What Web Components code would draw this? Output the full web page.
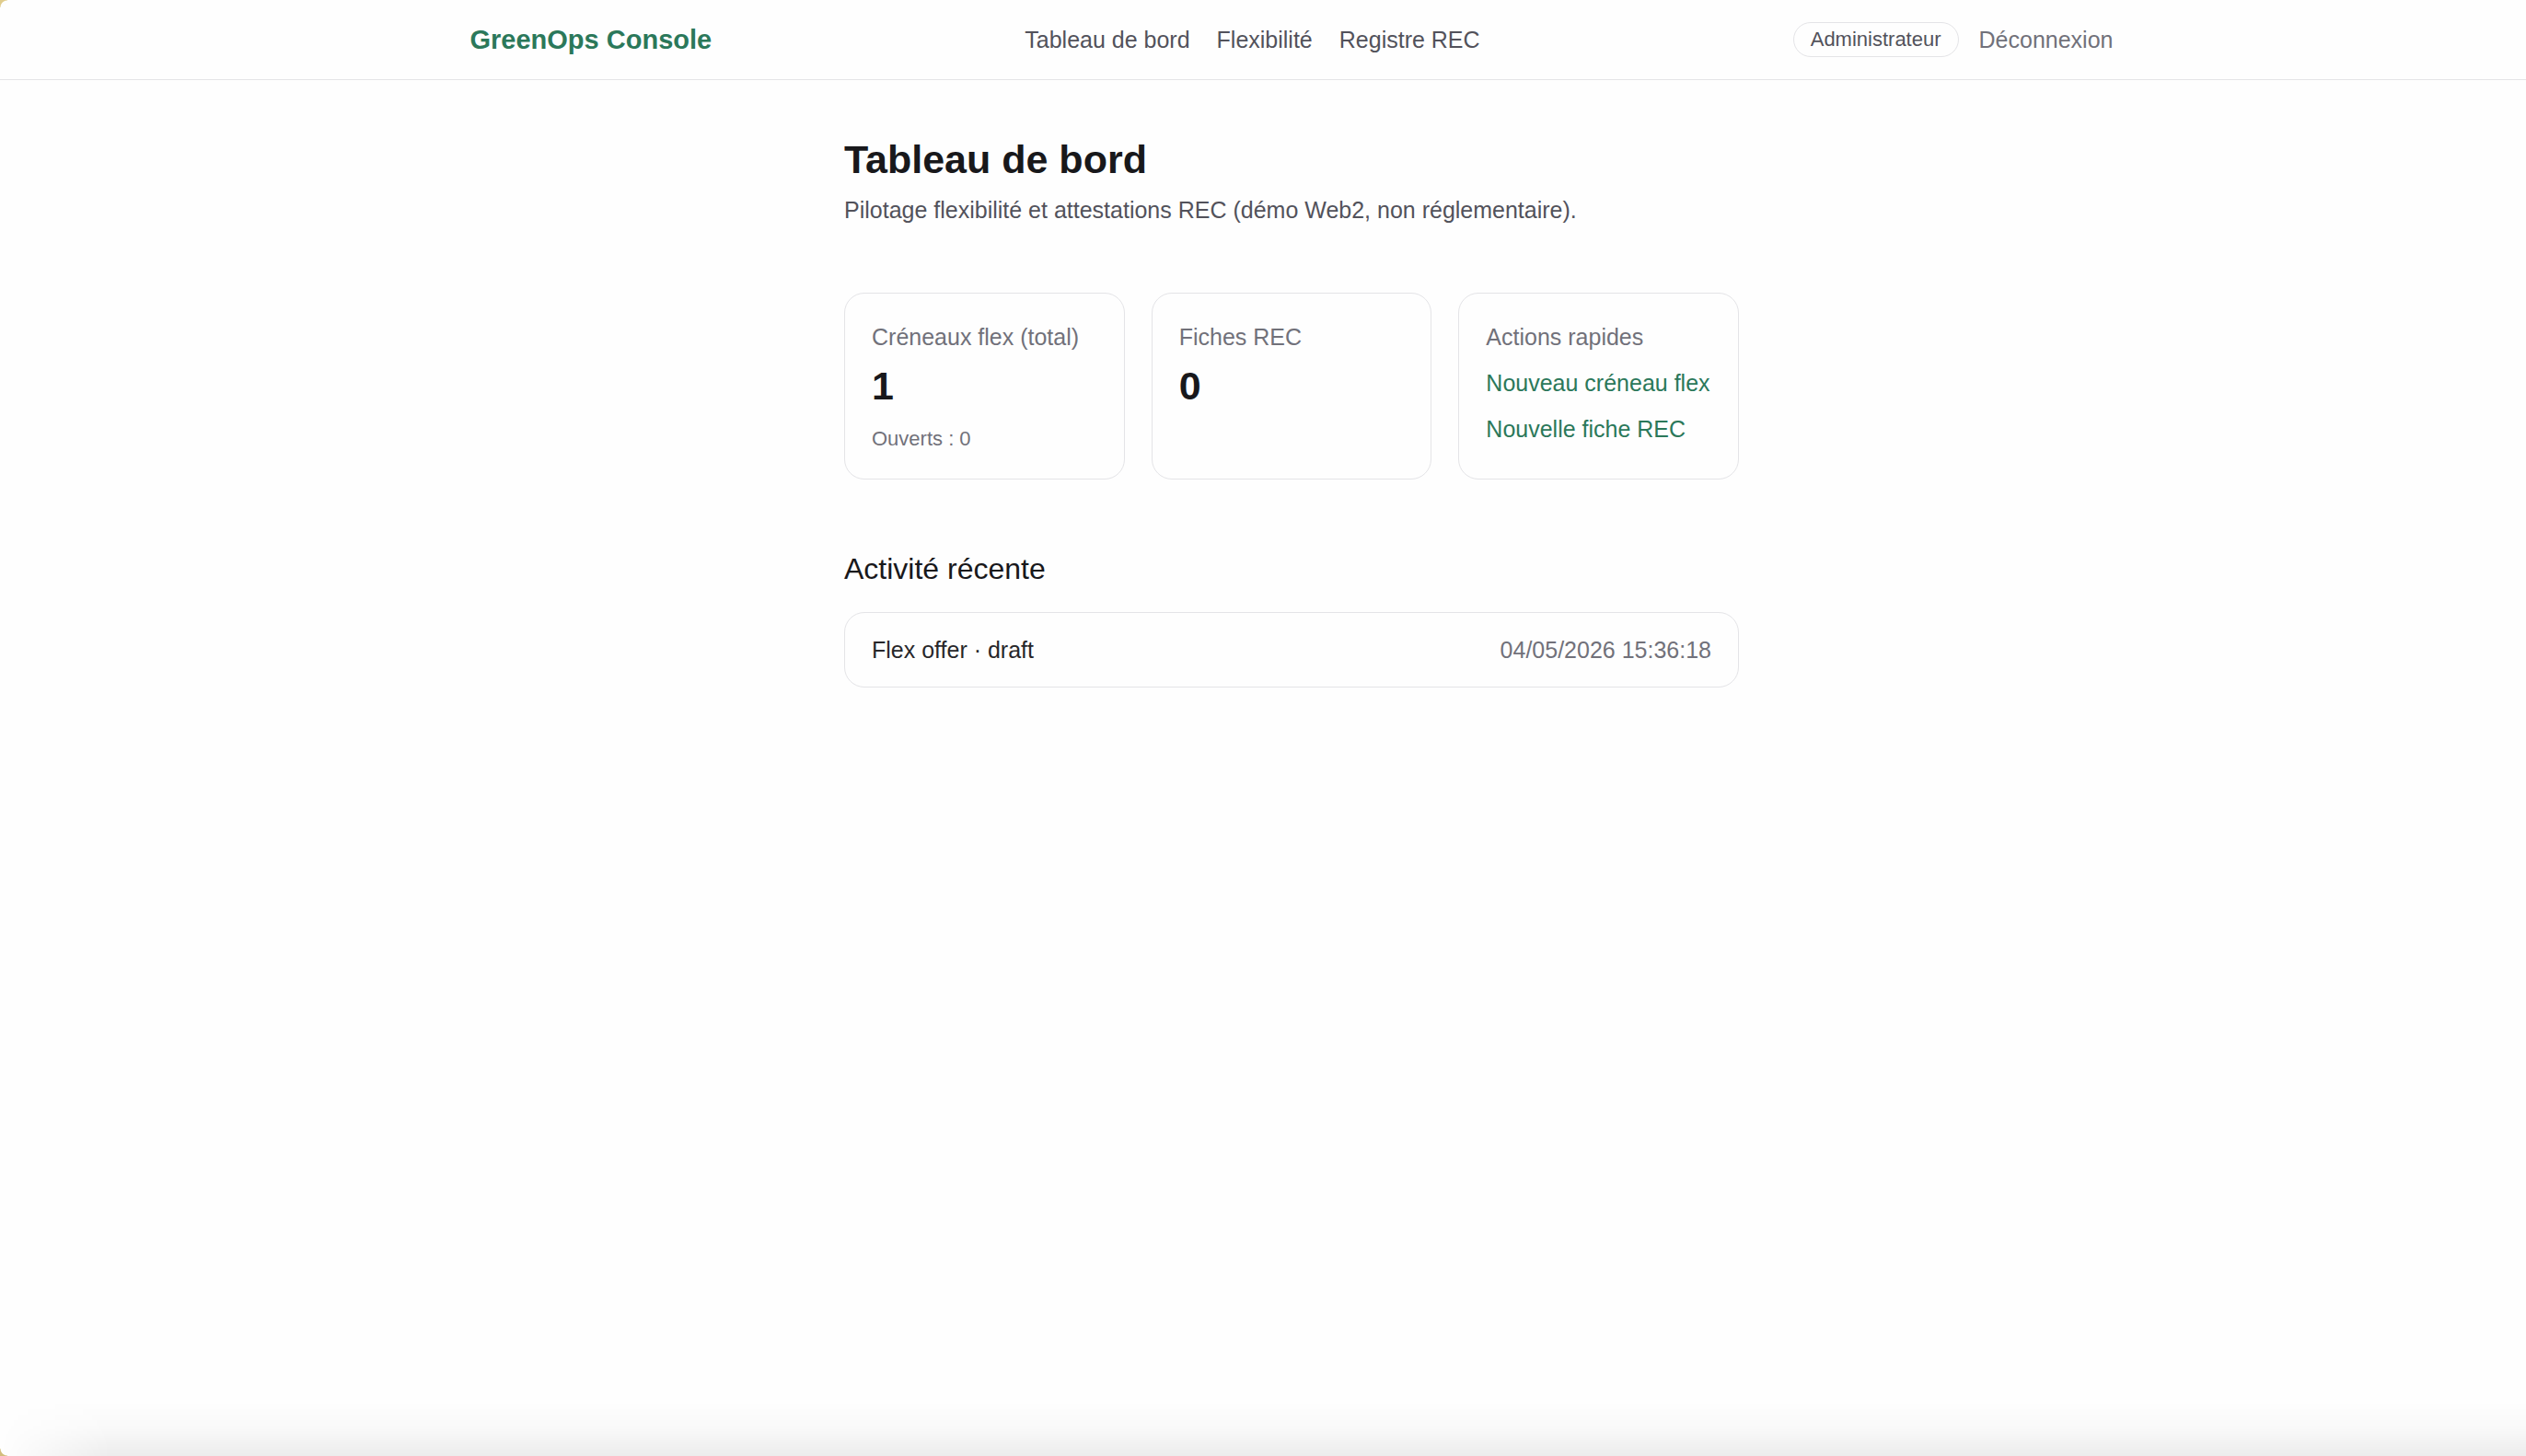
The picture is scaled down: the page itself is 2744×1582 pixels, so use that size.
<!DOCTYPE html>
<html lang="fr">
<head>
<meta charset="utf-8">
<title>GreenOps Console</title>
<style>
html {
  --green: #2b785a;
  --ink: #18181b;
  --body: #52525b;
  --muted: #71717a;
  --line: #e4e4e7;
}
body {
  margin: 0;
  background: #fefefe;
  color: var(--ink);
  font: 25px/36px "Liberation Sans", Arial, sans-serif;
}
</style>
</head>
<body>
<app-shell>
  <app-header slot="header" brand="GreenOps Console" role-name="Administrateur">
    <nav-link href="#dashboard">Tableau de bord</nav-link>
    <nav-link href="#flex">Flexibilité</nav-link>
    <nav-link href="#rec">Registre REC</nav-link>
  </app-header>

  <page-title heading="Tableau de bord">Pilotage flexibilité et attestations REC (démo Web2, non réglementaire).</page-title>

  <card-grid>
    <stat-card label="Créneaux flex (total)" value="1">Ouverts : 0</stat-card>
    <stat-card label="Fiches REC" value="0"></stat-card>
    <action-card label="Actions rapides">
      <action-link href="#new-flex">Nouveau créneau flex</action-link>
      <action-link href="#new-rec">Nouvelle fiche REC</action-link>
    </action-card>
  </card-grid>

  <activity-list heading="Activité récente">
    <activity-item datetime="2026-05-04T15:36:18" date="04/05/2026 15:36:18">Flex offer · draft</activity-item>
  </activity-list>
</app-shell>

<script>
// Small base: clones a template and copies attributes into [data-text] nodes
class BaseElement extends HTMLElement {
  constructor() {
    super();
    this.attachShadow({ mode: 'open' });
    const tpl = document.createElement('template');
    tpl.innerHTML = this.constructor.template;
    this.shadowRoot.appendChild(tpl.content.cloneNode(true));
  }

  connectedCallback() {
    this.shadowRoot.querySelectorAll('[data-text]').forEach((el) => {
      el.textContent = this.getAttribute(el.dataset.text) || '';
    });
    const link = this.shadowRoot.querySelector('a[data-href]');
    if (link) link.href = this.getAttribute('href') || '#';
  }
}

// ── Layout ──────────────────────────────────────────────────────────────────
class AppShell extends BaseElement {
  static template = `
<style>
:host {
  display: flex;
  flex-direction: column;
  min-height: 100vh;
  position: relative;
  overflow: hidden;
  --shift: 62px;
}
main {
  box-sizing: border-box;
  width: 100%;
  padding: 58px 0 58px var(--shift);
}
.column {
  display: flex;
  flex-direction: column;
  gap: 72px;
  box-sizing: border-box;
  width: 100%;
  max-width: 1030px;
  margin: 0 auto;
  padding: 0 29px;
}
.shade {
  position: absolute;
  inset: auto 0 0 0;
  height: 60px;
  pointer-events: none;
  background: linear-gradient(to bottom, transparent, rgba(0,0,0,0.02) 50%, rgba(0,0,0,0.07));
  mask-image: linear-gradient(to right, transparent, #000 120px);
}
.corner {
  position: absolute;
  left: 0;
  width: 8px;
  height: 8px;
  pointer-events: none;
}
.top { top: 0; background: radial-gradient(circle at 100% 100%, transparent 7px, #e0cc8c 8px); }
.bottom { bottom: 0; background: radial-gradient(circle at 100% 0, transparent 7px, #d3bd7c 8px); }
</style>
<slot name="header"></slot>
<main><div class="column"><slot></slot></div></main>
<div class="shade"></div>
<div class="corner top"></div>
<div class="corner bottom"></div>
`;
}

class AppHeader extends BaseElement {
  static template = `
<style>
:host { display: block; }
header {
  padding-left: var(--shift);
  border-bottom: 1px solid var(--line);
}
.bar {
  display: flex;
  align-items: center;
  justify-content: space-between;
  box-sizing: border-box;
  max-width: 1843px;
  min-height: 86px;
  margin: 0 auto;
  padding: 0 29px;
}
.brand {
  color: var(--green);
  font-size: 29px;
  font-weight: 700;
  text-decoration: none;
}
nav { display: flex; gap: 29px; }
.account { display: flex; align-items: center; gap: 22px; }
.role {
  padding: 4px 18px;
  border: 1px solid var(--line);
  border-radius: 20px;
  color: var(--body);
  font-size: 22px;
  line-height: 28px;
}
button {
  padding: 0;
  border: 0;
  background: none;
  color: var(--muted);
  font: inherit;
  cursor: pointer;
}
</style>
<header>
  <div class="bar">
    <a class="brand" href="#" data-text="brand"></a>
    <nav><slot></slot></nav>
    <div class="account">
      <span class="role" data-text="role-name"></span>
      <button type="button">Déconnexion</button>
    </div>
  </div>
</header>
`;
}

class NavLink extends BaseElement {
  static template = `
<style>
:host { display: block; }
a { color: var(--body); text-decoration: none; }
</style>
<a data-href><slot></slot></a>
`;
}

// ── Dashboard ───────────────────────────────────────────────────────────────
class PageTitle extends BaseElement {
  static template = `
<style>
:host { display: flex; flex-direction: column; gap: 9px; }
h1 { margin: 0; font-size: 43px; line-height: 56px; }
p { margin: 0; color: var(--body); }
</style>
<h1 data-text="heading"></h1>
<p><slot></slot></p>
`;
}

class CardGrid extends BaseElement {
  static template = `
<style>
:host {
  display: grid;
  grid-template-columns: repeat(3, minmax(0, 1fr));
  gap: 29px;
}
</style>
<slot></slot>
`;
}

class StatCard extends BaseElement {
  static template = `
<style>
:host {
  display: block;
  padding: 29px;
  border: 1px solid var(--line);
  border-radius: 22px;
}
p { margin: 0; }
.label { color: var(--muted); }
.value { margin-top: 7px; font-size: 43px; font-weight: 700; line-height: 56px; }
.note { margin-top: 16px; color: var(--muted); font-size: 22px; line-height: 28px; }
</style>
<p class="label" data-text="label"></p>
<p class="value" data-text="value"></p>
<p class="note"><slot></slot></p>
`;
}

class ActionCard extends BaseElement {
  static template = `
<style>
:host {
  display: flex;
  flex-direction: column;
  gap: 14px;
  padding: 29px;
  border: 1px solid var(--line);
  border-radius: 22px;
}
p { margin: 0; color: var(--muted); }
</style>
<p data-text="label"></p>
<slot></slot>
`;
}

class ActionLink extends BaseElement {
  static template = `
<style>
:host { display: block; white-space: nowrap; }
a { color: var(--green); text-decoration: none; }
</style>
<a data-href><slot></slot></a>
`;
}

class ActivityList extends BaseElement {
  static template = `
<style>
:host { display: flex; flex-direction: column; gap: 22px; }
h2 { margin: 0; font-size: 32px; font-weight: 400; line-height: 50px; }
.list { border: 1px solid var(--line); border-radius: 22px; }
</style>
<h2 data-text="heading"></h2>
<div class="list" role="list"><slot></slot></div>
`;
}

class ActivityItem extends BaseElement {
  static template = `
<style>
:host {
  display: flex;
  justify-content: space-between;
  gap: 29px;
  padding: 22px 29px;
}
.what { color: #27272a; }
time { color: var(--muted); }
</style>
<span class="what"><slot></slot></span>
<time data-text="date"></time>
`;

  connectedCallback() {
    super.connectedCallback();
    this.setAttribute('role', 'listitem');
    this.shadowRoot.querySelector('time').dateTime = this.getAttribute('datetime');
  }
}

customElements.define('app-shell', AppShell);
customElements.define('app-header', AppHeader);
customElements.define('nav-link', NavLink);
customElements.define('page-title', PageTitle);
customElements.define('card-grid', CardGrid);
customElements.define('stat-card', StatCard);
customElements.define('action-card', ActionCard);
customElements.define('action-link', ActionLink);
customElements.define('activity-list', ActivityList);
customElements.define('activity-item', ActivityItem);
</script>
</body>
</html>
